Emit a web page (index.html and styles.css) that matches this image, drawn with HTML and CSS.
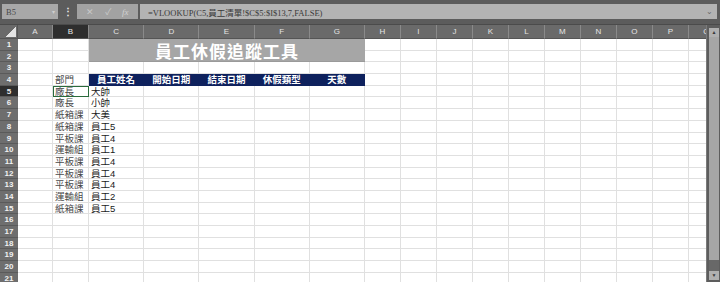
FILE: index.html
```html
<!DOCTYPE html>
<html lang="zh-Hant">
<head>
    <meta charset="UTF-8">
    <meta name="viewport" content="width=device-width, initial-scale=1.0">
    <title>員工休假追蹤工具</title>
    <link rel="stylesheet" href="styles.css">
</head>
<body>
    <div class="app">
        <div class="topbar">
            <div class="namebox"><span>B5</span><span class="caret">▾</span></div>
            <div class="grip">⋮</div>
            <div class="fxbox"><span>✕</span><span>✓</span><span class="fx">fx</span></div>
            <div class="formula">
                <span>=VLOOKUP(C5,員工清單!$C$5:$I$13,7,FALSE)</span>
                <span class="caret">⌄</span>
            </div>
        </div>

        <div class="workspace">
            <div class="sheet" id="sheet"></div>
            <div class="vscroll">
                <div class="arrow">▲</div>
                <div class="thumb"></div>
                <div class="track"></div>
                <div class="arrow">▼</div>
            </div>
        </div>
    </div>

    <script src="script.js"></script>
</body>
</html>
```

FILE: styles.css
```css
* {
    box-sizing: border-box;
}

body {
    margin: 0;
    background: #5e5e5e;
    font-family: "Liberation Sans", "Noto Sans CJK TC", sans-serif;
    overflow: hidden;
}

.app {
    width: 720px;
    height: 282px;
    overflow: hidden;
    background: #5e5e5e;
}

/* formula bar */
.topbar {
    height: 25px;
    display: flex;
    align-items: flex-start;
    padding: 4px 3px 0 2px;
    background: #5c5c5c;
    border-bottom: 1px solid #4b4b4b;
}

.namebox {
    width: 56px;
    height: 15px;
    background: #a8a8a8;
    display: flex;
    align-items: center;
    justify-content: space-between;
    padding: 0 3px 0 4px;
    font: 8.5px "Liberation Serif", serif;
    color: #4a4a4a;
}

.namebox .caret {
    font-size: 6px;
    color: #cfcfcf;
}

.grip {
    width: 19px;
    text-align: center;
    color: #e6e6e6;
    font-weight: bold;
    font-size: 10px;
    line-height: 15px;
}

.fxbox {
    width: 61px;
    height: 15px;
    background: #a2a2a2;
    display: flex;
    align-items: center;
    justify-content: space-around;
    padding: 0 4px;
    color: #c8c8c8;
    font-size: 9px;
}

.fxbox .fx {
    font: italic 9px "Liberation Serif", serif;
    color: #d2d2d2;
}

.formula {
    flex: 1;
    margin-left: 2px;
    height: 15px;
    background: #b3b3b3;
    display: flex;
    align-items: center;
    justify-content: space-between;
    padding: 0 4px 0 8px;
    font: 8.5px "Liberation Serif", "Noto Sans CJK TC", serif;
    color: #3a3a3a;
}

.formula .caret {
    font-size: 8px;
    color: #6a6a6a;
}

/* sheet */
.workspace {
    display: flex;
    height: 257px;
}

.sheet {
    width: 707px;
    flex: none;
    display: grid;
    grid-template-columns: 18px 35px 36px repeat(5, 55.2px) repeat(10, 36px);
    grid-template-rows: 14px;
    grid-auto-rows: 11.7px;
    background: #fff;
    overflow: hidden;
    border-right: 1px solid #7a7a7a;
}

.corner {
    background: #6a6a6a;
    display: flex;
    align-items: flex-end;
    justify-content: flex-end;
    padding: 0 1px 1px 0;
    border-right: 1px solid #555;
    border-bottom: 1px solid #555;
}

.corner::after {
    content: "";
    width: 10px;
    height: 10px;
    background: linear-gradient(135deg, transparent 50%, #e4e4e4 50%);
}

.colhead {
    background: #6a6a6a;
    color: #e4e4e4;
    font-size: 8px;
    line-height: 14px;
    text-align: center;
    border-right: 1px solid #8a8a8a;
    border-bottom: 1px solid #555;
}

.rowhead {
    background: #6e6e6e;
    color: #f2f2f2;
    font-size: 8px;
    font-weight: bold;
    line-height: 12px;
    text-align: center;
    border-bottom: 1px solid #5a5a5a;
}

.colhead.active,
.rowhead.active {
    background: #2e2e2e;
    color: #e8e8e8;
}

.cell {
    border-right: 1px solid #e0e0e0;
    border-bottom: 1px solid #e0e0e0;
    font-size: 9.5px;
    line-height: 12px;
    padding-left: 2px;
    white-space: nowrap;
    color: #222;
}

.cell.dept {
    color: #4a4a4a;
}

.cell.name {
    color: #1a1a1a;
}

.cell.head {
    background: #0e215d;
    border-color: #0e215d;
    color: #fff;
    font-weight: bold;
    text-align: center;
    padding-left: 0;
}

.cell.selected {
    position: relative;
    z-index: 1;
    outline: 1px solid #2a6b3c;
    outline-offset: -1px;
}

.title {
    grid-column: 4 / 9;
    grid-row: 2 / 4;
    background: #a6a6a6;
    color: #fff;
    font-weight: bold;
    font-size: 17px;
    letter-spacing: 1px;
    display: flex;
    align-items: center;
    justify-content: center;
    border-bottom: 1px solid #9a9a9a;
}

/* scrollbar */
.vscroll {
    width: 13px;
    background: #5d5d5d;
    display: flex;
    flex-direction: column;
    align-items: center;
    padding: 3px 0 2px 1px;
}

.arrow {
    width: 10px;
    height: 9px;
    background: #b0b0b0;
    color: #3a3a3a;
    font-size: 5px;
    line-height: 9px;
    text-align: center;
}

.thumb {
    width: 10px;
    height: 223px;
    background: #a6a6a6;
}

.track {
    flex: 1;
    width: 10px;
    background: #686868;
}
```

FILE: script.js
```js
const sheet = document.getElementById('sheet');
const letters = 'ABCDEFGHIJKLMNOPQ'.split('');
const rowCount = 21;

const cells = {
    B4: '部門',
    C4: '員工姓名',
    D4: '開始日期',
    E4: '結束日期',
    F4: '休假類型',
    G4: '天數'
};

const depts = ['廠長', '廠長', '紙箱課', '紙箱課', '平板課', '運輸組', '平板課', '平板課', '平板課', '運輸組', '紙箱課'];
const names = ['大帥', '小帥', '大美', '員工5', '員工4', '員工1', '員工4', '員工4', '員工4', '員工2', '員工5'];

depts.forEach((d, i) => {
    cells['B' + (i + 5)] = d;
    cells['C' + (i + 5)] = names[i];
});

function add(cls, text) {
    const el = document.createElement('div');
    el.className = cls;
    if (text) el.textContent = text;
    sheet.appendChild(el);
    return el;
}

add('corner');
letters.forEach(l => add('colhead' + (l === 'B' ? ' active' : ''), l));

// merged C1:G2
add('title', '員工休假追蹤工具');

for (let r = 1; r <= rowCount; r++) {
    add('rowhead' + (r === 5 ? ' active' : ''), String(r));
    letters.forEach((l, i) => {
        if (r <= 2 && i >= 2 && i <= 6) return;
        let cls = 'cell';
        if (r === 4 && i >= 2 && i <= 6) cls += ' head';
        if (l === 'B') cls += ' dept';
        if (l === 'C') cls += ' name';
        if (l + r === 'B5') cls += ' selected';
        add(cls, cells[l + r]);
    });
}
```
